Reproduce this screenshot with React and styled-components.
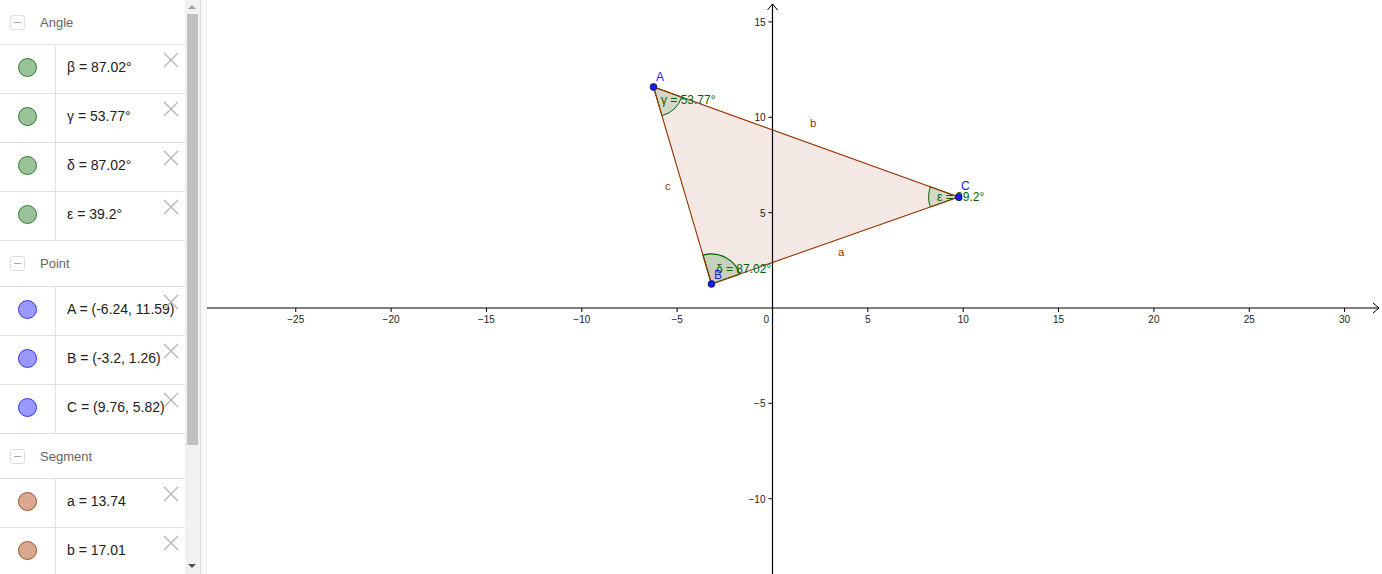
import styled, { createGlobalStyle } from "styled-components";

const GlobalStyle = createGlobalStyle`
  html, body {
    margin: 0;
    padding: 0;
    background: #fff;
    font-family: "Liberation Sans", Arial, sans-serif;
  }
  #root {
    height: 574px;
  }
`;

const Page = styled.div`
  display: flex;
  width: 1382px;
  height: 574px;
  overflow: hidden;
  background: #fff;
`;

const Algebra = styled.div`
  width: 185px;
  height: 574px;
  overflow: hidden;
  background: #fff;
`;

const GroupHeader = styled.div`
  display: flex;
  align-items: center;
  height: ${(p) => p.$h || 46}px;
  padding-left: 10px;
  gap: 15px;
  border-bottom: 1px solid #e2e2e2;
  box-sizing: border-box;
  font-size: 13px;
  color: #666;
`;

const Toggle = styled.span`
  position: relative;
  width: 15px;
  height: 15px;
  border: 1px solid #ddd;
  border-radius: 3px;
  box-sizing: border-box;
  &::after {
    content: "";
    position: absolute;
    left: 3px;
    right: 3px;
    top: 6px;
    height: 1px;
    background: #aaa;
  }
`;

const Row = styled.div`
  position: relative;
  display: flex;
  height: 49px;
  border-bottom: 1px solid #e2e2e2;
  box-sizing: border-box;
`;

const Marble = styled.div`
  width: 56px;
  display: flex;
  align-items: center;
  justify-content: center;
  padding-bottom: 4px;
  border-right: 1px solid #e2e2e2;
  box-sizing: border-box;
  &::before {
    content: "";
    width: 19px;
    height: 19px;
    border-radius: 50%;
    background: ${(p) => p.$fill};
    border: 1px solid ${(p) => p.$stroke};
    box-sizing: border-box;
  }
`;

const Value = styled.div`
  flex: 1;
  display: flex;
  align-items: center;
  padding: 0 0 4px 11px;
  font-size: 14px;
  color: #222;
  white-space: nowrap;
`;

const Close = styled.svg`
  position: absolute;
  top: 7px;
  right: 6px;
`;

const ScrollBar = styled.div`
  position: relative;
  width: 15px;
  height: 574px;
  background: #f1f1f1;
  box-sizing: border-box;
`;

const Thumb = styled.div`
  position: absolute;
  left: 2px;
  right: 2px;
  top: 14px;
  height: 431px;
  background: #c1c1c1;
`;

const Arrow = styled.div`
  position: absolute;
  left: 3px;
  width: 0;
  height: 0;
  border-left: 4px solid transparent;
  border-right: 4px solid transparent;
  ${(p) =>
    p.$down
      ? "bottom: 6px; border-top: 4px solid #505050;"
      : "top: 5px; border-bottom: 4px solid #a3a3a3;"}
`;

const Divider = styled.div`
  width: 7px;
  height: 574px;
  background: #f7f7f7;
  border-left: 1px solid #dcdcdc;
  border-right: 1px solid #ececec;
  box-sizing: border-box;
`;

const Graphics = styled.svg`
  display: block;
  flex: 1;
  height: 574px;
  font-family: "Liberation Sans", Arial, sans-serif;
`;

const groups = [
  {
    name: "Angle",
    h: 45,
    fill: "#99c299",
    stroke: "#2f7d2f",
    items: ["β = 87.02°", "γ = 53.77°", "δ = 87.02°", "ε = 39.2°"],
  },
  {
    name: "Point",
    h: 46,
    fill: "#9999ff",
    stroke: "#3535ee",
    items: ["A = (-6.24, 11.59)", "B = (-3.2, 1.26)", "C = (9.76, 5.82)"],
  },
  {
    name: "Segment",
    h: 45,
    fill: "#d9a88f",
    stroke: "#a0522d",
    items: ["a = 13.74", "b = 17.01"],
  },
];

// graphics view coordinates
const OX = 772.5 - 207;
const OY = 308;
const S = 19.07;
const px = (x) => OX + x * S;
const py = (y) => OY - y * S;

const A = [px(-6.24), py(11.59)];
const B = [px(-3.2), py(1.26)];
const C = [px(9.76), py(5.82)];

function sector(v, p1, p2, r) {
  const d1 = [p1[0] - v[0], p1[1] - v[1]];
  const d2 = [p2[0] - v[0], p2[1] - v[1]];
  const l1 = Math.hypot(d1[0], d1[1]);
  const l2 = Math.hypot(d2[0], d2[1]);
  const a = [v[0] + (d1[0] / l1) * r, v[1] + (d1[1] / l1) * r];
  const b = [v[0] + (d2[0] / l2) * r, v[1] + (d2[1] / l2) * r];
  const cross = d1[0] * d2[1] - d1[1] * d2[0];
  const sweep = cross > 0 ? 1 : 0;
  return `M${v[0]} ${v[1]} L${a[0]} ${a[1]} A${r} ${r} 0 0 ${sweep} ${b[0]} ${b[1]} Z`;
}

function CloseIcon() {
  return (
    <Close width="16" height="16" viewBox="0 0 16 16">
      <path d="M1 1 L15 15 M15 1 L1 15" stroke="#b4b4b4" strokeWidth="1.3" fill="none" />
    </Close>
  );
}

function GraphicsView() {
  const xTicks = [-25, -20, -15, -10, -5, 5, 10, 15, 20, 25, 30];
  const yTicks = [15, 10, 5, -5, -10];
  return (
    <Graphics width="1175" height="574" viewBox="0 0 1175 574">
      <polygon
        points={`${A[0]},${A[1]} ${B[0]},${B[1]} ${C[0]},${C[1]}`}
        fill="#f2e6e0"
        fillOpacity="0.9"
      />
      {/* axes */}
      <line x1="0" y1={OY} x2="1172" y2={OY} stroke="#000" strokeWidth="1.2" />
      <path d={`M1166 ${OY - 5} L1172 ${OY} L1166 ${OY + 5}`} stroke="#000" fill="none" strokeWidth="1" />
      <line x1={OX} y1="574" x2={OX} y2="4" stroke="#000" strokeWidth="1.2" />
      <path d={`M${OX - 5} 10 L${OX} 4 L${OX + 5} 10`} stroke="#000" fill="none" strokeWidth="1" />
      {xTicks.map((v) => (
        <g key={`x${v}`}>
          <line x1={px(v)} y1={OY} x2={px(v)} y2={OY + 4} stroke="#000" />
          <text x={px(v)} y={OY + 15} fontSize="10" textAnchor="middle" fill="#222">
            {v < 0 ? `\u2212${-v}` : v}
          </text>
        </g>
      ))}
      <text x={OX - 9} y={OY + 15} fontSize="10" fill="#222">
        0
      </text>
      {yTicks.map((v) => (
        <g key={`y${v}`}>
          <line x1={OX - 4} y1={py(v)} x2={OX} y2={py(v)} stroke="#000" />
          <text x={OX - 7} y={py(v) + 4} fontSize="10" textAnchor="end" fill="#222">
            {v < 0 ? `\u2212${-v}` : v}
          </text>
        </g>
      ))}
      {/* angles */}
      <path d={sector(A, B, C, 30)} fill="#006400" fillOpacity="0.12" stroke="#006400" strokeWidth="1" />
      <path d={sector(B, C, A, 30)} fill="#006400" fillOpacity="0.18" stroke="#006400" strokeWidth="1.2" />
      <path d={sector(C, A, B, 30)} fill="#006400" fillOpacity="0.12" stroke="#006400" strokeWidth="1" />
      {/* segments */}
      <polygon
        points={`${A[0]},${A[1]} ${B[0]},${B[1]} ${C[0]},${C[1]}`}
        fill="none"
        stroke="#993300"
        strokeWidth="1.1"
      />
      <g fontSize="11.5" fill="#993300">
        <text x={810 - 207} y="127">b</text>
        <text x={665 - 207} y="190">c</text>
        <text x={838 - 207} y="256">a</text>
      </g>
      <g fontSize="12" fill="#006400">
        <text x={661 - 207} y="104">γ = 53.77°</text>
        <text x={716 - 207} y="273">δ = 87.02°</text>
        <text x={937 - 207} y="201">ε = 39.2°</text>
      </g>
      {[A, B, C].map((p, i) => (
        <circle key={i} cx={p[0]} cy={p[1]} r="3.4" fill="#1a1aff" stroke="#1a1a40" strokeWidth="0.9" />
      ))}
      <g fontSize="12" fill="#1a1aff">
        <text x={656 - 207} y="81">A</text>
        <text x={714 - 207} y="279">B</text>
        <text x={961 - 207} y="190">C</text>
      </g>
    </Graphics>
  );
}

export default function App() {
  return (
    <>
      <GlobalStyle />
      <Page>
        <Algebra>
          {groups.map((g) => (
            <div key={g.name}>
              <GroupHeader $h={g.h}>
                <Toggle />
                <span>{g.name}</span>
              </GroupHeader>
              {g.items.map((it) => (
                <Row key={it}>
                  <Marble $fill={g.fill} $stroke={g.stroke} />
                  <Value>{it}</Value>
                  <CloseIcon />
                </Row>
              ))}
            </div>
          ))}
        </Algebra>
        <ScrollBar>
          <Arrow />
          <Thumb />
          <Arrow $down />
        </ScrollBar>
        <Divider />
        <GraphicsView />
      </Page>
    </>
  );
}
